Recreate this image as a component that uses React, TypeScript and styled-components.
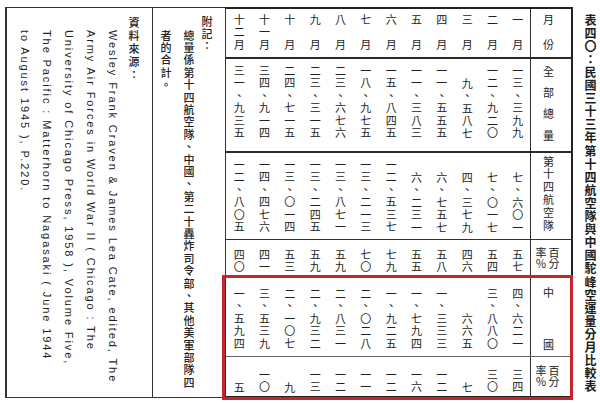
import React from 'react';
import styled, { createGlobalStyle } from 'styled-components';

const CJK = `"Noto Sans CJK TC", "Noto Sans CJK SC", sans-serif`;

const GlobalStyle = createGlobalStyle`
  html, body { margin: 0; padding: 0; background: #fff; }
  body { font-family: ${CJK}; color: #222; }
  #root { width: 600px; height: 403px; overflow: hidden; }
`;

const Page = styled.div`
  display: flex;
  align-items: flex-start;
  width: 600px;
  height: 403px;
  box-sizing: border-box;
  padding: 7px 0 0 5px;
  background: #fff;
`;

const SourceBox = styled.div`
  width: 148px;
  height: 391px;
  box-sizing: border-box;
  border: 1px solid #333;
  border-left-width: 2px;
  writing-mode: vertical-rl;
  padding: 9px 8px 0 0;
  overflow: hidden;
`;

const SourceHead = styled.div`
  font-family: ${CJK};
  font-size: 11px;
  line-height: 20px;
  letter-spacing: 2px;
  font-weight: 500;
`;

const SourceLine = styled.div`
  font-family: "Liberation Sans", Arial, sans-serif;
  font-size: 11px;
  line-height: 22px;
  letter-spacing: 1.9px;
  padding-top: 13px;
  white-space: nowrap;
  color: #1e1e1e;
`;

const NotesBox = styled.div`
  width: 72px;
  height: 391px;
  box-sizing: border-box;
  border-top: 1px solid #333;
  border-bottom: 1px solid #333;
  writing-mode: vertical-rl;
  padding: 8px 11px 0 0;
  overflow: hidden;
`;

const NotesHead = styled.div`
  font-size: 11px;
  line-height: 14px;
  letter-spacing: 1.4px;
  font-weight: 500;
`;

const NotesLine = styled.div`
  font-size: 11px;
  line-height: 23px;
  letter-spacing: 1.4px;
  padding-top: 14px;
  white-space: nowrap;
  font-weight: 500;
`;

const Table = styled.div`
  position: relative;
  width: 348px;
  height: 391px;
  box-sizing: border-box;
  border-top: 2px solid #222;
  border-bottom: 2px solid #222;
  border-left: 1px solid #333;
  border-right: 2px solid #222;
  display: flex;
  flex-direction: column;
`;

const Row = styled.div<{ $h: number; $bw: number; $bc?: string }>`
  display: grid;
  grid-template-columns: repeat(12, 1fr) 41px;
  grid-template-rows: minmax(0, 1fr);
  height: ${(p) => p.$h}px;
  flex: none;
  box-sizing: border-box;
  border-bottom: ${(p) => p.$bw}px solid ${(p) => p.$bc || '#333'};
`;

const DataCell = styled.div<{ $pb: number }>`
  display: flex;
  justify-content: center;
  align-items: flex-end;
  padding-bottom: ${(p) => p.$pb}px;
  box-sizing: border-box;
  min-height: 0;
`;

const Num = styled.span`
  writing-mode: vertical-rl;
  font-size: 11px;
  line-height: 1;
  letter-spacing: 1.5px;
  white-space: nowrap;
`;

const LabelCell = styled.div<{ $pt: number }>`
  display: flex;
  justify-content: center;
  align-items: flex-start;
  padding-top: ${(p) => p.$pt}px;
  box-sizing: border-box;
  min-height: 0;
`;

const HeadCell = styled.div<{ $pt?: number; $pr?: number; $center?: boolean }>`
  border-left: 1px solid #333;
  padding-top: ${(p) => p.$pt ?? 0}px;
  padding-right: ${(p) => p.$pr ?? 6}px;
  display: flex;
  justify-content: center;
  align-items: ${(p) => (p.$center ? 'center' : 'flex-start')};
  box-sizing: border-box;
  min-height: 0;
`;

const VLabel = styled.span<{ $ls: number }>`
  writing-mode: vertical-rl;
  font-size: 11px;
  line-height: 1;
  letter-spacing: ${(p) => p.$ls}px;
  margin-bottom: -${(p) => p.$ls}px;
  white-space: nowrap;
`;

const PctHead = styled.span`
  writing-mode: vertical-rl;
  font-size: 11px;
  line-height: 13px;
  letter-spacing: 0.5px;
  white-space: nowrap;
`;

const RedFrame = styled.div`
  position: absolute;
  left: -4px;
  right: -2px;
  top: 266px;
  bottom: -4px;
  border: 3px solid #c3262f;
  pointer-events: none;
`;

const Title = styled.div`
  writing-mode: vertical-rl;
  padding: 7px 0 0 11px;
  font-size: 12px;
  line-height: 1;
  letter-spacing: 1.1px;
  font-weight: 700;
  white-space: nowrap;
  color: #1c1c1c;
`;

type MonthData = { m: string; total: string; f14: string; p1: string; cn: string; p2: string };

const data: MonthData[] = [
  { m: '一月', total: '一三、三九九', f14: '七、六〇一', p1: '五七', cn: '四、六二一', p2: '三四' },
  { m: '二月', total: '一二、九二〇', f14: '七、〇一七', p1: '五四', cn: '三、八八〇', p2: '三〇' },
  { m: '三月', total: '九、五八七', f14: '四、三七九', p1: '四六', cn: '六六五', p2: '七' },
  { m: '四月', total: '一一、五五五', f14: '六、七五七', p1: '五八', cn: '一、三三三', p2: '一二' },
  { m: '五月', total: '一一、三八三', f14: '六、二三一', p1: '五五', cn: '一、七九四', p2: '一六' },
  { m: '六月', total: '一五、八四五', f14: '一二、五三七', p1: '七九', cn: '一、九二五', p2: '一二' },
  { m: '七月', total: '一八、九七五', f14: '一三、二一三', p1: '七〇', cn: '二、〇二八', p2: '一一' },
  { m: '八月', total: '二三、六七六', f14: '一三、八七一', p1: '五九', cn: '二、八三一', p2: '一二' },
  { m: '九月', total: '二三、三一五', f14: '一三、二四五', p1: '五九', cn: '二、九三二', p2: '一三' },
  { m: '十月', total: '二四、七一五', f14: '一三、〇一四', p1: '五三', cn: '二、一〇七', p2: '九' },
  { m: '十一月', total: '三四、九一四', f14: '一四、四七六', p1: '四一', cn: '三、五三九', p2: '一〇' },
  { m: '十二月', total: '三一、九三五', f14: '一二、八〇五', p1: '四〇', cn: '一、五九四', p2: '五' },
];

const cols = [...data].reverse();

const valueRow = (key: keyof MonthData, pb: number) =>
  cols.map((d) => (
    <DataCell key={d.m} $pb={pb}>
      <Num>{d[key]}</Num>
    </DataCell>
  ));

export default function App() {
  return (
    <>
      <GlobalStyle />
      <Page>
        <SourceBox>
          <SourceHead>資料來源：</SourceHead>
          <SourceLine>Wesley Frank Craven &amp; James Lea Cate, edited, The</SourceLine>
          <SourceLine>Army Air Forces in World War II ( Chicago : The</SourceLine>
          <SourceLine>University of Chicago Press, 1958 ), Volume Five,</SourceLine>
          <SourceLine>The Pacific : Matterhorn to Nagasaki ( June 1944</SourceLine>
          <SourceLine>to August 1945 ), P.220.</SourceLine>
        </SourceBox>
        <NotesBox>
          <NotesHead>附記：</NotesHead>
          <NotesLine>總量係第十四航空隊、中國、第二十轟炸司令部、其他美軍部隊四</NotesLine>
          <NotesLine>者的合計。</NotesLine>
        </NotesBox>
        <Table>
          <Row $h={50} $bw={2} $bc="#2a2a2a">
            {cols.map((d) => (
              <LabelCell key={d.m} $pt={5}>
                <VLabel $ls={d.m.length === 2 ? 14 : 1.5}>{d.m}</VLabel>
              </LabelCell>
            ))}
            <HeadCell $pt={5}>
              <VLabel $ls={14}>月份</VLabel>
            </HeadCell>
          </Row>
          <Row $h={94} $bw={2} $bc="#2a2a2a">
            {valueRow('total', 11)}
            <HeadCell $pt={7}>
              <VLabel $ls={10.3}>全部總量</VLabel>
            </HeadCell>
          </Row>
          <Row $h={87} $bw={1}>
            {valueRow('f14', 5)}
            <HeadCell $pt={3}>
              <VLabel $ls={1.8}>第十四航空隊</VLabel>
            </HeadCell>
          </Row>
          <Row $h={38} $bw={1}>
            {valueRow('p1', 3)}
            <HeadCell $pr={8} $center>
              <PctHead>
                百分
                <br />
                率％
              </PctHead>
            </HeadCell>
          </Row>
          <Row $h={79} $bw={1} $bc="#666">
            {valueRow('cn', 6)}
            <HeadCell $pt={9}>
              <VLabel $ls={41}>中國</VLabel>
            </HeadCell>
          </Row>
          <Row $h={39} $bw={0}>
            {valueRow('p2', 2)}
            <HeadCell $pr={8} $center>
              <PctHead>
                百分
                <br />
                率％
              </PctHead>
            </HeadCell>
          </Row>
          <RedFrame />
        </Table>
        <Title>表四〇：民國三十三年第十四航空隊與中國駝峰空運量分月比較表</Title>
      </Page>
    </>
  );
}
